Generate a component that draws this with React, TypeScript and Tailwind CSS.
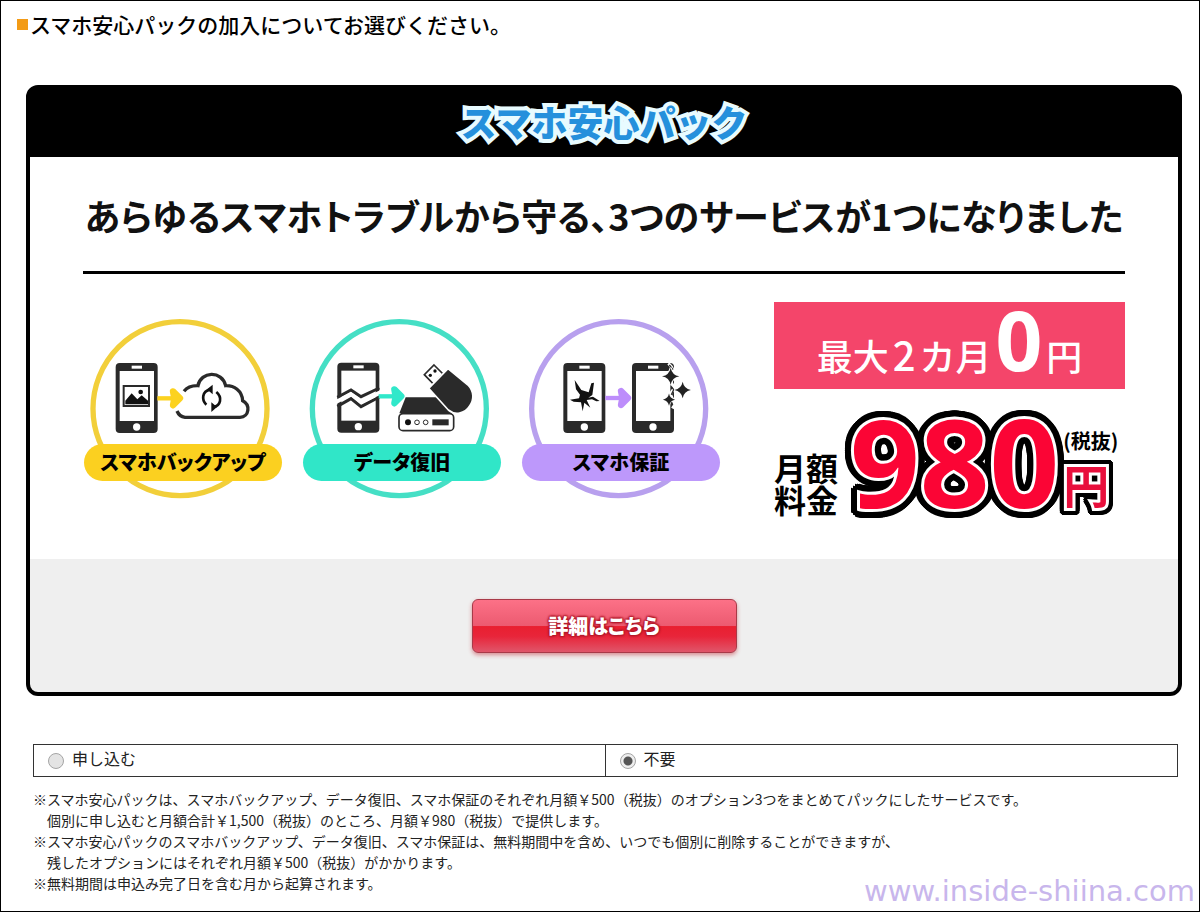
import React from 'react';

interface PhoneProps {
  x: number;
  y: number;
}

interface ServiceBadgeProps {
  label: string;
  pillClass: string;
  ringColor: string;
  viewBox: string;
  cx: number;
  children: React.ReactNode;
}

const INK = '#2a2a2a';

const NOTES = [
  ['※スマホ安心パックは、スマホバックアップ、データ復旧、スマホ保証のそれぞれ月額￥500（税抜）のオプション3つをまとめてパックにしたサービスです。', '個別に申し込むと月額合計￥1,500（税抜）のところ、月額￥980（税抜）で提供します。'],
  ['※スマホ安心パックのスマホバックアップ、データ復旧、スマホ保証は、無料期間中を含め、いつでも個別に削除することができますが、', '残したオプションにはそれぞれ月額￥500（税抜）がかかります。'],
  ['※無料期間は申込み完了日を含む月から起算されます。'],
];

const OPTIONS = [
  { value: 'apply', label: '申し込む' },
  { value: 'none', label: '不要' },
];

function Phone({ x, y }: PhoneProps) {
  return (
    <g transform={`translate(${x} ${y})`}>
      <rect width="126" height="210" rx="12" fill={INK} />
      <rect x="12" y="24" width="103" height="150" fill="#fff" />
      <rect x="48" y="8" width="31" height="9" fill="#fff" />
      <circle cx="63" cy="192" r="11" fill="#fff" />
    </g>
  );
}

function Arrow({ x, y, color }: PhoneProps & { color: string }) {
  return (
    <g transform={`translate(${x} ${y})`} stroke={color}>
      <path d="M0 0H62" strokeWidth="13" />
      <path d="M47-21L68 0L47 21L51 0Z" fill={color} strokeWidth="19" strokeLinejoin="round" strokeLinecap="round" />
    </g>
  );
}

function ServiceBadge({ label, pillClass, ringColor, viewBox, cx, children }: ServiceBadgeProps) {
  return (
    <li className="relative">
      <svg width="198" height="180" viewBox={viewBox} fill="none" aria-hidden="true">
        <circle cx={cx} cy="326" r="261" stroke={ringColor} strokeWidth="16" fill="#fff" />
        {children}
      </svg>
      <span className={`absolute inset-x-0 top-[125px] h-[37px] rounded-full text-center text-xl leading-9 font-black whitespace-nowrap text-black [font-feature-settings:'palt'] ${pillClass}`}>
        {label}
      </span>
    </li>
  );
}

function BackupIcon() {
  return (
    <>
      <Phone x={137} y={189} />
      <rect x="161" y="258" width="76" height="60" stroke={INK} strokeWidth="6" fill="#fff" />
      <path d="M166 313V302L185 280L202 298L215 286L234 302V313Z" fill="#111" />
      <circle cx="212" cy="276" r="7" fill="#111" />
      <Arrow x={262} y={295} color="#fcd21f" />
      <path d="M342 274Q356 256 384 257C392 214 456 210 467 257C492 256 516 272 518 302C542 314 538 351 510 352H345Q328 350 321 333" stroke={INK} strokeWidth="10" />
      <path d="M409 314C394 300 396 274 420 269M439 276C458 292 452 317 431 321" stroke="#111" strokeWidth="8" />
      <path d="M411 268L428 254V283ZM441 321L424 307V336Z" fill="#111" />
    </>
  );
}

function RecoveryIcon() {
  return (
    <>
      <Phone x={142} y={188} />
      <path d="M142 292L183 270L213 290L268 264M142 319L183 296L213 320L268 291" stroke={INK} strokeWidth="9" />
      <path d="M138 299L183 276L213 298L270 271V285L213 313L183 289L138 313Z" fill="#fff" />
      <Arrow x={266} y={289} color="#30e8ca" />
      <path d="M347 292H449L486 340H328Z" fill={INK} />
      <rect x="327" y="341" width="164" height="51" rx="12" stroke={INK} strokeWidth="5" fill="#fff" />
      <circle cx="354" cy="367" r="9" fill="#111" />
      <circle cx="381" cy="367" r="7" stroke={INK} strokeWidth="3" />
      <circle cx="407" cy="367" r="7" stroke={INK} strokeWidth="3" />
      <rect x="427" y="358" width="49" height="18" fill={INK} />
      <path d="M432 195L459 222L431 253L403 224Z" fill="#fff" stroke={INK} strokeWidth="5" />
      <circle cx="435" cy="213" r="5" fill="#111" />
      <circle cx="421" cy="226" r="5" fill="#111" />
      <path d="M474 206L534 255C553 275 552 300 539 318C524 342 494 346 475 330L416 265Z" fill={INK} stroke="#fff" strokeWidth="5" />
    </>
  );
}

function WarrantyIcon() {
  const star = 'M0-26Q4-4 26 0Q4 4 0 26Q-4 4-26 0Q-4-4 0-26Z';
  return (
    <>
      <Phone x={157} y={189} />
      <path d="M191 240L211 270L233 277L241 250L249 248L244 285L232 293L246 290L266 303L256 304L243 298L227 300L238 323L220 308L215 334L210 307L188 305L177 299L204 295L207 284L195 268Z" fill="#111" />
      <Arrow x={283} y={294} color="#bd8dfb" />
      <Phone x={363} y={189} />
      <path d="M472 190Q484 200 488 214L480 246L490 264L478 282L492 314L484 325" stroke="#fff" strokeWidth="9" />
      <path d="M475 195L486 209M481 260L488 269L481 284" stroke={INK} strokeWidth="4" />
      <g fill="#222" stroke="#fff" strokeWidth="6" paintOrder="stroke">
        <path transform="translate(479 229)" d={star} />
        <path transform="translate(515 270) scale(.95)" d={star} />
        <path transform="translate(474 299) scale(.7)" d={star} />
      </g>
    </>
  );
}

function PricePanel() {
  return (
    <div className="w-[351px]">
      <p className="flex h-[87px] items-baseline justify-center bg-[#f4456a] text-4xl leading-none font-medium text-white">
        <span>最大</span>
        <span className="px-1 text-[40px] leading-none">2</span>
        <span>カ月</span>
        <span className="px-1 font-['Open_Sans',sans-serif] text-[82px] leading-[74px] font-bold">0</span>
        <span>円</span>
      </p>
      <div className="mt-3 flex h-[120px] items-end">
        <p className="w-16 shrink-0 pb-1.5 text-[32px] leading-8 font-bold text-black">月額料金</p>
        <p className="pl-3 font-['Open_Sans',sans-serif] text-[122px] leading-[120px] font-bold text-[#fb0535] [-webkit-text-stroke:6px_#fff] [filter:drop-shadow(2px_0_#000)_drop-shadow(-2px_0_#000)_drop-shadow(0_2px_#000)_drop-shadow(0_-2px_#000)_drop-shadow(2px_2px_#000)_drop-shadow(-2px_-2px_#000)_drop-shadow(2px_-2px_#000)_drop-shadow(-2px_2px_#000)] [paint-order:stroke_fill]">980</p>
        <div className="pb-1.5 pl-1">
          <p className="text-xl leading-5 font-bold whitespace-nowrap text-black">(税抜)</p>
          <p className="text-[46px] leading-[64px] font-bold text-[#e80f3c] [-webkit-text-stroke:6px_#fff] [filter:drop-shadow(2px_0_#000)_drop-shadow(-2px_0_#000)_drop-shadow(0_2px_#000)_drop-shadow(0_-2px_#000)_drop-shadow(1px_1px_#000)_drop-shadow(-1px_-1px_#000)_drop-shadow(1px_-1px_#000)_drop-shadow(-1px_1px_#000)] [paint-order:stroke_fill]">円</p>
        </div>
      </div>
    </div>
  );
}

export default function App() {
  const [choice, setChoice] = React.useState('none');

  return (
    <main className="relative min-h-screen border border-black bg-white font-['Noto_Sans_CJK_JP',sans-serif] text-[#222]">
      <h1 className="flex items-center gap-0.5 pt-[7px] pl-4 text-[21px] leading-8 font-medium text-black">
        <span className="size-[11px] bg-[#f39b16]" />
        スマホ安心パックの加入についてお選びください。
      </h1>

      <section className="mt-[45px] mr-[17px] ml-[25px] overflow-hidden rounded-xl border-4 border-black bg-black">
        <h2 className="h-[68px] text-center text-4xl leading-[64px] font-black text-[#2590dc] [-webkit-text-stroke:8px_#e8fbff] [paint-order:stroke_fill]">
          スマホ安心パック
        </h2>

        <div className="h-[402px] bg-white px-[53px] pt-7">
          <p className="border-b-3 border-black pb-[26px] text-center text-4xl leading-[60px] font-bold whitespace-nowrap text-[#111] [font-feature-settings:'palt']">
            あらゆるスマホトラブルから守る、3つのサービスが1つになりました
          </p>
          <div className="mt-7 flex items-start justify-between">
            <ul className="mt-[17px] flex gap-[21px] pl-px">
              <ServiceBadge label="スマホバックアップ" pillClass="bg-[#fbd020]" ringColor="#f2cf3a" viewBox="42 57 594 540" cx={330}>
                <BackupIcon />
              </ServiceBadge>
              <ServiceBadge label="データ復旧" pillClass="bg-[#30e6c8]" ringColor="#45dfc5" viewBox="39 57 594 540" cx={328}>
                <RecoveryIcon />
              </ServiceBadge>
              <ServiceBadge label="スマホ保証" pillClass="bg-[#bd98fb]" ringColor="#b8a0ee" viewBox="33 57 594 540" cx={323}>
                <WarrantyIcon />
              </ServiceBadge>
            </ul>
            <PricePanel />
          </div>
        </div>

        <div className="flex h-[133px] justify-center bg-[#efefef] pt-10">
          <button
            type="button"
            className="h-[54px] w-[265px] rounded-md border border-[#a83a48] text-xl font-black text-white shadow-[0_2px_4px_#d98a90] [background-image:linear-gradient(#fc7187,#ec5a70_50%,#e91f30_51%,#e8253a_70%,#e0566a)] [font-feature-settings:'palt'] [text-shadow:1px_1px_2px_#b3182a,-1px_-1px_2px_#b3182a,1px_-1px_2px_#b3182a,-1px_1px_2px_#b3182a]"
          >
            詳細はこちら
          </button>
        </div>
      </section>

      <fieldset className="mt-12 mr-[21px] ml-8 grid grid-cols-2 divide-x divide-[#333] border border-[#333]">
        {OPTIONS.map((option) => (
          <label key={option.value} className="flex h-[31px] items-center gap-2 pl-[14px] text-base leading-5 text-[#222]">
            <input
              type="radio"
              name="pack"
              value={option.value}
              checked={choice === option.value}
              onChange={() => setChoice(option.value)}
              className="size-4 appearance-none rounded-full border border-[#a5a5a5] bg-[#e4e4e4] checked:[background-image:radial-gradient(circle,#555_4px,#eee_5px)]"
            />
            <span className="pb-1.5">{option.label}</span>
          </label>
        ))}
      </fieldset>

      <ul className="mt-3 pr-4 pl-8 text-sm leading-[21px]">
        {NOTES.map((lines) => (
          <li key={lines[0]} className="pl-[14px] -indent-[14px]">
            {lines[0]}
            {lines[1] && <p className="indent-0">{lines[1]}</p>}
          </li>
        ))}
      </ul>

      <p className="absolute right-1 bottom-0 font-['DejaVu_Sans',sans-serif] text-[29px] leading-10 text-[#c8b6ec]">www.inside-shiina.com</p>
    </main>
  );
}
